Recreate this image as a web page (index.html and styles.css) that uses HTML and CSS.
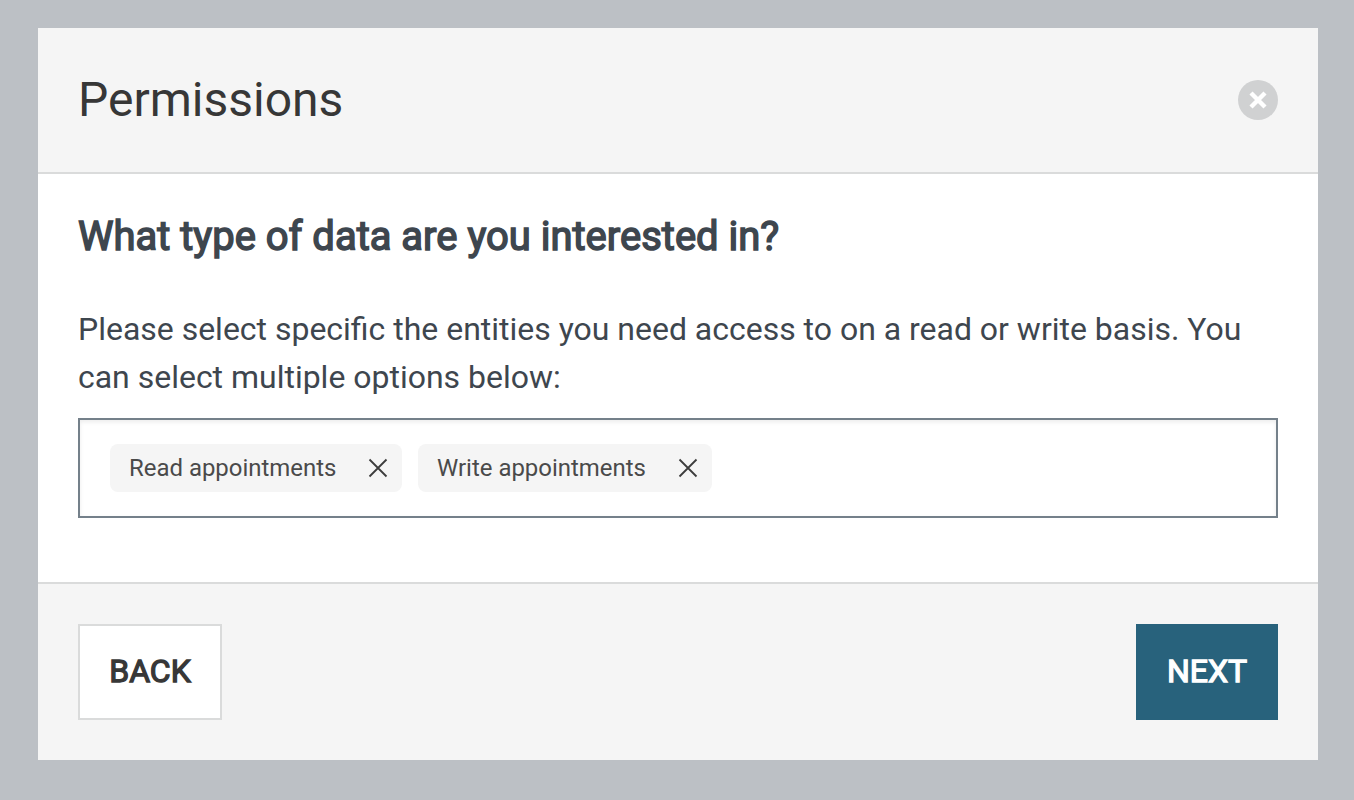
FILE: index.html
```html
<!DOCTYPE html>
<html lang="en">
<head>
<meta charset="utf-8">
<title>Permissions</title>
<link rel="stylesheet" href="styles.css">
</head>
<body>
<div class="modal">
  <header class="header">
    <h1 class="title">Permissions</h1>
    <button class="close" aria-label="Close"><svg width="40" height="40" viewBox="0 0 40 40"><path d="M13 13l14 14M27 13l-14 14" stroke="#fff" stroke-width="4.4"/></svg></button>
  </header>
  <main class="body">
    <h2 class="question">What type of data are you interested in?</h2>
    <p class="text">Please select specific the entities you need access to on a read or write basis. You can select multiple options below:</p>
    <div class="select">
      <span class="tag"><span class="label">Read appointments</span><svg width="20" height="20" viewBox="0 0 20 20"><path d="M1.5 1.5l17 17M18.5 1.5l-17 17" stroke="#3c3c3c" stroke-width="1.8"/></svg></span>
      <span class="tag tag-write"><span class="label">Write appointments</span><svg width="20" height="20" viewBox="0 0 20 20"><path d="M1.5 1.5l17 17M18.5 1.5l-17 17" stroke="#3c3c3c" stroke-width="1.8"/></svg></span>
    </div>
  </main>
  <footer class="footer">
    <button class="btn back">BACK</button>
    <button class="btn next">NEXT</button>
  </footer>
</div>
</body>
</html>
```
FILE: styles.css
```css
* { box-sizing: border-box; }
body { margin: 0; height: 800px; padding: 28px 36px 40px 38px; background: #bcc0c5; font-family: Roboto, sans-serif; overflow: hidden; }
.modal { width: 1280px; height: 732px; background: #fff; display: flex; flex-direction: column; }
.header { height: 146px; padding: 0 40px; background: #f5f5f5; border-bottom: 2px solid #dadbdb; display: flex; align-items: center; justify-content: space-between; }
.title { margin: 0; font-size: 48px; line-height: 56px; font-weight: 400; color: #373737; }
.close { width: 40px; height: 40px; padding: 0; border: 0; border-radius: 50%; background: #d0d1d2; }
.close svg, .tag svg { display: block; }
.body { height: 408px; padding: 39px 40px 0; color: #3e464e; }
.question { margin: 0 0 44px; font-size: 39.97px; line-height: 48px; font-weight: 400; -webkit-text-stroke: 1.5px currentColor; white-space: nowrap; }
.text { margin: 0 0 17px; font-size: 31.97px; line-height: 48px; }
.select { height: 100px; padding: 0 30px; border: 2px solid #74808a; box-shadow: inset 0 2px 4px rgba(0,0,0,.08); display: flex; align-items: center; gap: 16px; }
.tag { width: 292px; height: 48px; padding: 0 14px 0 19px; border-radius: 8px; background: #f5f5f5; display: flex; align-items: center; justify-content: space-between; font-size: 23.95px; color: #4a4a4a; }
.tag-write { width: 294px; }
.label { white-space: nowrap; }
.footer { height: 178px; padding: 40px; border-top: 2px solid #dadbdb; background: #f5f5f5; display: flex; justify-content: space-between; }
.btn { height: 96px; padding: 0 0 2px; font: 400 32px/40px Roboto, sans-serif; -webkit-text-stroke: 1.3px currentColor; }
.back { width: 144px; background: #fff; border: 2px solid #dadbdb; color: #373737; }
.next { width: 142px; background: #28627c; border: 0; color: #fff; }
```
